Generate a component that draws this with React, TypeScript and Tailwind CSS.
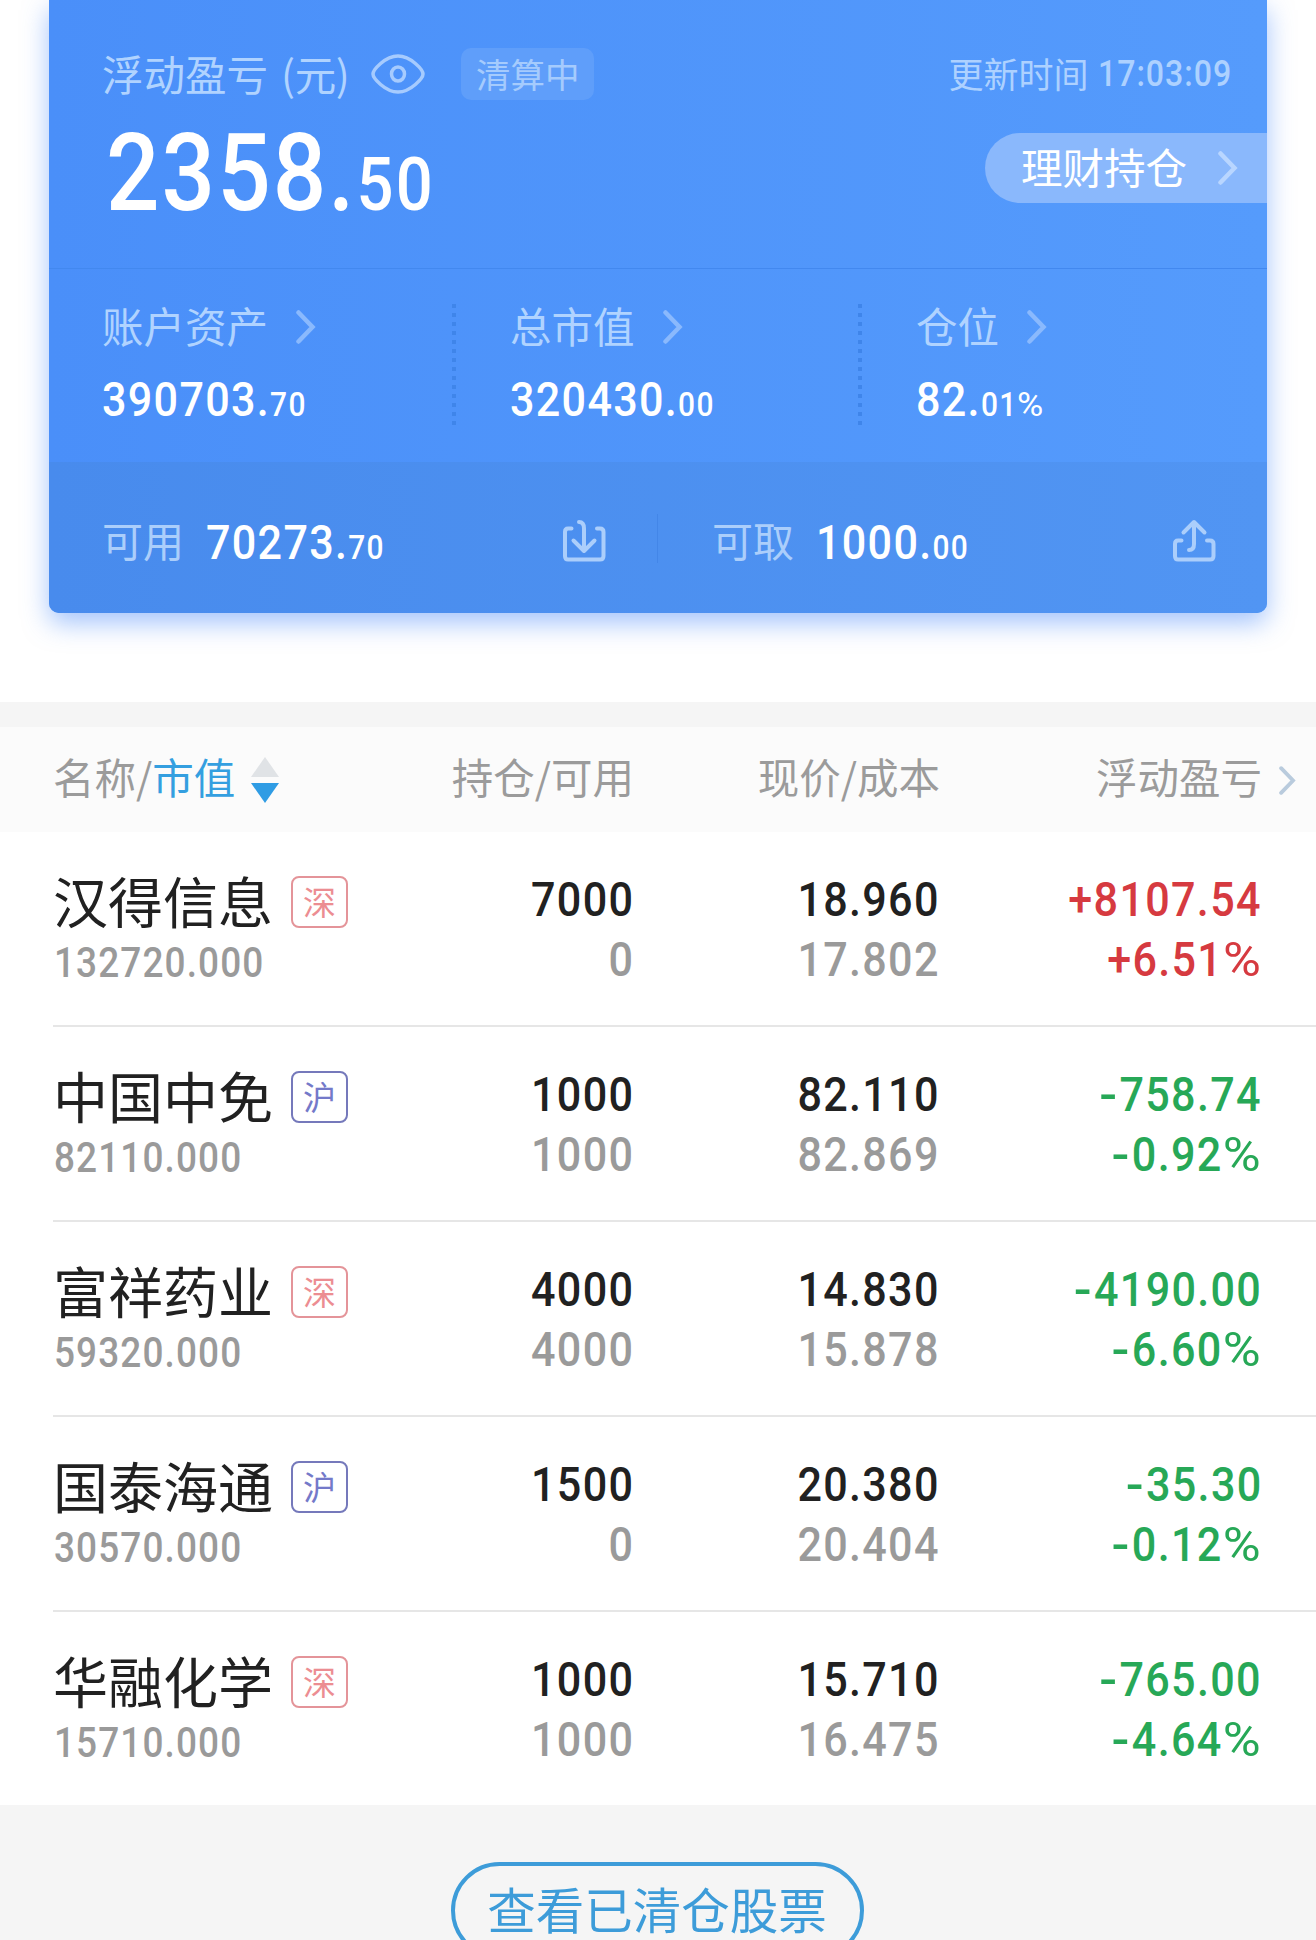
import React from 'react';
import clsx from 'clsx';

interface Holding {
  name: string;
  market: '深' | '沪';
  value: string;
  position: string;
  available: string;
  price: string;
  cost: string;
  profit: string;
  percent: string;
}

const holdings: Holding[] = [
  { name: '汉得信息', market: '深', value: '132720.000', position: '7000', available: '0', price: '18.960', cost: '17.802', profit: '+8107.54', percent: '+6.51%' },
  { name: '中国中免', market: '沪', value: '82110.000', position: '1000', available: '1000', price: '82.110', cost: '82.869', profit: '-758.74', percent: '-0.92%' },
  { name: '富祥药业', market: '深', value: '59320.000', position: '4000', available: '4000', price: '14.830', cost: '15.878', profit: '-4190.00', percent: '-6.60%' },
  { name: '国泰海通', market: '沪', value: '30570.000', position: '1500', available: '0', price: '20.380', cost: '20.404', profit: '-35.30', percent: '-0.12%' },
  { name: '华融化学', market: '深', value: '15710.000', position: '1000', available: '1000', price: '15.710', cost: '16.475', profit: '-765.00', percent: '-4.64%' },
];

const summary = [
  { label: '账户资产', int: '390703.', dec: '70', col: 'w-[407px]' },
  { label: '总市值', int: '320430.', dec: '00', col: 'w-[406px]' },
  { label: '仓位', int: '82.', dec: '01%', col: 'w-[351px]' },
];

// Narrow numerals, squeezed horizontally from the given edge
const Num: React.FC<{ className?: string; right?: boolean; children: React.ReactNode }> = ({ className, right, children }) => (
  <span
    className={clsx(
      "inline-block whitespace-nowrap font-['Roboto','Noto_Sans_CJK_SC',sans-serif] tracking-[0.03em] scale-x-[0.88]",
      right ? 'origin-right' : 'origin-left',
      className,
    )}
  >
    {children}
  </span>
);

// Minus and percent signs are wider than the digits around them
const Signed: React.FC<{ text: string }> = ({ text }) => (
  <>
    {text.split('').map((ch, i) => {
      if (ch === '-') return <span key={i} className="mr-[0.02em] inline-block origin-right scale-x-[1.22]">-</span>;
      if (ch === '%') return <span key={i} className="ml-[0.15em] inline-block origin-right scale-x-[1.2] font-normal">%</span>;
      return ch;
    })}
  </>
);

const Chevron: React.FC<{ className?: string }> = ({ className }) => (
  <svg viewBox="0 0 20 34" className={className} fill="none" stroke="currentColor" strokeWidth="4.5" strokeLinecap="round" strokeLinejoin="miter">
    <path d="M2.5 2.5 16.500 17 2.5 31.5" />
  </svg>
);

const EyeIcon = () => (
  <svg viewBox="0 0 54 40" className="h-10 w-[54px] text-[#a6cbfe]" fill="none" stroke="currentColor" strokeWidth="3.5">
    <path d="M2 20C2 16 14 2 27 2S52 16 52 20 40 38 27 38 2 24 2 20Z" />
    <ellipse cx="27" cy="20" rx="6.5" ry="7" />
  </svg>
);

const TransferInIcon = () => (
  <svg viewBox="0 0 44 44" className="h-11 w-11 text-[#abcefb]" fill="none" stroke="currentColor" strokeWidth="4" strokeLinecap="round" strokeLinejoin="round">
    <path d="M9.500 9.500H6Q3 9.500 3 13V37Q3 40.500 6 40.500H38Q41.500 40.500 41.500 37V13Q41.500 9.500 38 9.500H35" />
    <path d="M17 3Q22 3 22 9.500V31M11.500 21.500 22 32 32.500 21.500" />
  </svg>
);

const TransferOutIcon = () => (
  <svg viewBox="0 0 44 44" className="h-11 w-11 text-[#abcefb]" fill="none" stroke="currentColor" strokeWidth="4" strokeLinecap="round" strokeLinejoin="round">
    <path d="M9.500 21.500H6Q3 21.500 3 25V37Q3 40.500 6 40.500H38Q41.500 40.500 41.500 37V25Q41.500 21.500 38 21.500H35" />
    <path d="M17 31Q22 31 22 25V3M11.500 13.500 22 3 32.500 13.500" />
  </svg>
);

const DottedLine = () => (
  <svg className="mt-[35px] h-[121px] w-1" viewBox="0 0 4 121">
    <path d="M2 0V121" stroke="#3f85ea" strokeWidth="4" strokeDasharray="4 5" />
  </svg>
);

const AccountCard: React.FC = () => (
  <section className="mx-[49px] h-[613px] rounded-b-[10px] bg-gradient-to-r from-[#4a8ff9] to-[#559bfc] shadow-[0_10px_26px_rgba(74,138,250,0.5)]">
    <div className="flex h-[268px] justify-between pl-[53px]">
      <div>
        <div className="mt-[45px] flex h-[58px] items-center text-[#b0d3ff]">
          <span className="pb-0.5 text-[41.5px] leading-[58px]">浮动盈亏</span>
          <span className="ml-[13px] pb-0.5 text-[41.5px] leading-[58px] tracking-[-0.01em]">(元)</span>
          <div className="ml-[22px]">
            <EyeIcon />
          </div>
          <span className="ml-9 flex h-[52px] w-[133px] items-center justify-center rounded-[10px] bg-[#5f9efa] pb-0.5 text-[34.5px] leading-[52px] text-[#a5cbfd]">
            清算中
          </span>
        </div>
        <Num className="mt-[11px] ml-1 text-[107px] leading-[120px] font-medium tracking-[0.022em] text-white">
          2358.<span className="text-[74px]">50</span>
        </Num>
      </div>
      <div className="flex flex-col items-end">
        <div className="mt-[47px] mr-[35px] flex h-[52px] items-center text-[#add1ff]">
          <span className="text-[35px] leading-[52px]">更新时间</span>
          <Num className="-mr-[18px] ml-[9px] pt-0.5 text-[36.5px] leading-[52px] font-medium">17:03:09</Num>
        </div>
        <button className="mt-[34px] flex h-[70px] w-[282px] items-center rounded-l-full bg-[#8ab8fc] pl-[36px] text-[41.500px] leading-[70px] text-white">
          <span className="pb-1">理财持仓</span>
          <Chevron className="ml-[31px] h-[34px] w-5 text-[#b9d6ff]" />
        </button>
      </div>
    </div>

    <div className="flex h-[194px] border-t border-[#4288ef]">
      {summary.map((item, i) => (
        <React.Fragment key={item.label}>
          <div className={clsx('pt-[27px]', item.col, i === 0 ? 'pl-[53px]' : 'pl-[54px]', i < 2 && '-mr-1')}>
            <div className="flex h-[62px] items-center text-[#b0d3ff]">
              <span className="pb-1 text-[41.500px] leading-[58px]">{item.label}</span>
              <Chevron className="ml-[28px] h-[34px] w-5 text-[#8ab9fd]" />
            </div>
            <Num className="mt-3 text-[49px] leading-[60px] font-medium text-white">
              {item.int}
              <span className="text-[34px]">
                <Signed text={item.dec} />
              </span>
            </Num>
          </div>
          {i < 2 && <DottedLine />}
        </React.Fragment>
      ))}
    </div>

    <div className="flex h-[151px] items-center rounded-b-[10px] bg-gradient-to-r from-[#488bed] to-[#5195f3] pt-1.5">
      <div className="flex w-[608px] items-center pr-[51px] pl-[53px]">
        <span className="pb-1 text-[41px] leading-[50px] text-[#abcefb]">可用</span>
        <Num className="ml-[22px] pt-2 text-[49px] leading-[50px] font-medium text-white">
          70273.<span className="text-[34px]">70</span>
        </Num>
        <span className="ml-auto">
          <TransferInIcon />
        </span>
      </div>
      <div className="mb-1 h-[49px] w-px bg-[#4386e8]" />
      <div className="flex w-[609px] items-center pr-[51px] pl-[54px]">
        <span className="pb-1 text-[41px] leading-[50px] text-[#abcefb]">可取</span>
        <Num className="ml-[22px] pt-2 text-[49px] leading-[50px] font-medium text-white">
          1000.<span className="text-[34px]">00</span>
        </Num>
        <span className="ml-auto">
          <TransferOutIcon />
        </span>
      </div>
    </div>
  </section>
);

const HoldingRow: React.FC<{ item: Holding; last: boolean }> = ({ item, last }) => (
  <div
    className={clsx(
      'ml-[53px] flex border-[#e6e6e6] text-[49px] leading-[60px] font-medium text-[#212121]',
      last ? 'h-[193px]' : 'h-[195px] border-b-2',
    )}
  >
    <div className="flex w-[320px] flex-col items-start pt-8">
      <div className="flex h-[70px] items-center font-normal">
        <span className="text-[55px] leading-[70px]">{item.name}</span>
        <span
          className={clsx(
            'mt-1.5 ml-[18px] flex h-[52px] w-[57px] items-center justify-center rounded-lg border-2 pb-0.5 text-[33px] leading-[48px]',
            item.market === '深' ? 'border-[#e49499] text-[#ec8d92]' : 'border-[#7579bb] text-[#7479c9]',
          )}
        >
          {item.market}
        </span>
      </div>
      <Num className="mt-1 ml-px text-[42px] leading-[50px] text-[#9a9a9a]">{item.value}</Num>
    </div>
    <div className="flex w-[261px] flex-col items-end pt-[38px]">
      <Num right>{item.position}</Num>
      <Num right className="text-[#9a9a9a]">{item.available}</Num>
    </div>
    <div className="flex w-[306px] flex-col items-end pt-[38px]">
      <Num right>{item.price}</Num>
      <Num right className="text-[#9a9a9a]">{item.cost}</Num>
    </div>
    <div
      className={clsx(
        'flex w-[322px] flex-col items-end pt-[38px]',
        item.profit.startsWith('+') ? 'text-[#d63a40]' : 'text-[#27a857]',
      )}
    >
      <Num right>
        <Signed text={item.profit} />
      </Num>
      <Num right>
        <Signed text={item.percent} />
      </Num>
    </div>
  </div>
);

const HoldingsTable: React.FC = () => (
  <section className="bg-white">
    <div className="flex h-[105px] items-center bg-[#fbfbfb] pb-[7px] pl-[53px] text-[41.500px] leading-[60px] text-[#9b9b9b]">
      <div className="flex w-[320px] items-center">
        <span>名称/</span>
        <span className="text-[#349fe0]">市值</span>
        <svg viewBox="0 0 28 46" className="mt-2 ml-4 h-[46px] w-7">
          <path d="M14 0 28 20H0Z" fill="#e0e3e6" />
          <path d="M0 26H28L14 46Z" fill="#2f9ce4" />
        </svg>
      </div>
      <div className="w-[261px] text-right">持仓/可用</div>
      <div className="w-[306px] text-right">现价/成本</div>
      <div className="w-[322px] text-right">浮动盈亏</div>
      <Chevron className="mt-2 ml-[17px] h-[29px] w-[17px] text-[#b9cbdd]" />
    </div>
    {holdings.map((item, i) => (
      <HoldingRow key={item.name} item={item} last={i === holdings.length - 1} />
    ))}
  </section>
);

export default function App() {
  return (
    <main className="h-[1940px] w-[1316px] overflow-hidden bg-white font-['Noto_Sans_CJK_SC',sans-serif]">
      <AccountCard />
      <div className="mt-[89px] h-[25px] bg-[#f5f5f5]" />
      <HoldingsTable />
      <div className="flex h-[135px] justify-center overflow-hidden bg-[#f5f5f5] pt-[57px]">
        <button className="mr-0.5 h-[97px] w-[413px] shrink-0 rounded-full border-4 border-[#3d9cd9] pb-1 text-[48.5px] leading-[85px] text-[#3d9cd9]">
          查看已清仓股票
        </button>
      </div>
    </main>
  );
}
